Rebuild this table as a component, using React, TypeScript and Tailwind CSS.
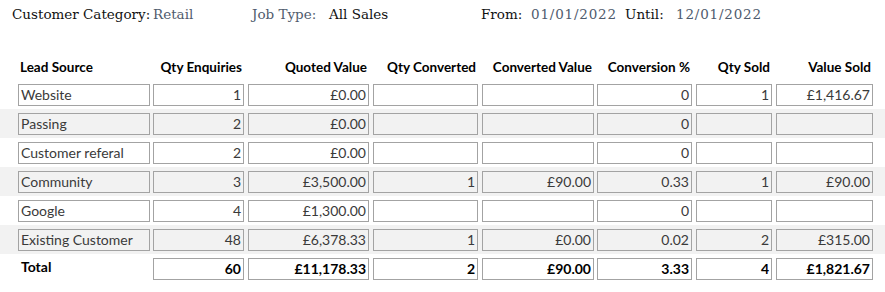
import React from 'react'

type Row = {
  source: string
  enquiries: string
  quoted: string
  converted: string
  convertedValue: string
  conversion: string
  sold: string
  valueSold: string
}

const ROWS: Row[] = [
  { source: 'Website', enquiries: '1', quoted: '£0.00', converted: '', convertedValue: '', conversion: '0', sold: '1', valueSold: '£1,416.67' },
  { source: 'Passing', enquiries: '2', quoted: '£0.00', converted: '', convertedValue: '', conversion: '0', sold: '', valueSold: '' },
  { source: 'Customer referal', enquiries: '2', quoted: '£0.00', converted: '', convertedValue: '', conversion: '0', sold: '', valueSold: '' },
  { source: 'Community', enquiries: '3', quoted: '£3,500.00', converted: '1', convertedValue: '£90.00', conversion: '0.33', sold: '1', valueSold: '£90.00' },
  { source: 'Google', enquiries: '4', quoted: '£1,300.00', converted: '', convertedValue: '', conversion: '0', sold: '', valueSold: '' },
  { source: 'Existing Customer', enquiries: '48', quoted: '£6,378.33', converted: '1', convertedValue: '£0.00', conversion: '0.02', sold: '2', valueSold: '£315.00' },
]

// box width + gap before it, matched to the report grid
const COLS = [
  'w-[132px] ml-[18px]',
  'w-[91px] ml-[3px]',
  'w-[121px] ml-[4px]',
  'w-[105px] ml-[4px]',
  'w-[112px] ml-[4px]',
  'w-[95px] ml-[3px]',
  'w-[76px] ml-[4px]',
  'w-[97px] ml-[4px]',
]

const HEADERS = [
  'Lead Source',
  'Qty Enquiries',
  'Quoted Value',
  'Qty Converted',
  'Converted Value',
  'Conversion %',
  'Qty Sold',
  'Value Sold',
]

const sans = "font-['Lato','Noto_Sans',sans-serif]"
const serif = "font-['DejaVu_Serif','Liberation_Serif',serif]"

function Box({ col, value, left, shaded, bold }: { col: number; value: string; left?: boolean; shaded?: boolean; bold?: boolean }) {
  return (
    <div
      className={`${COLS[col]} h-[22px] shrink-0 border border-[#a3a3a3] px-[2px] leading-[20px] whitespace-nowrap ${
        left ? 'text-left' : 'text-right'
      } ${shaded ? 'bg-[#f2f2f2]' : 'bg-white'} ${bold ? 'font-bold text-black' : 'text-[#3a3a3a]'}`}
    >
      {value}
    </div>
  )
}

export default function App() {
  return (
    <div className="w-[885px] h-[292px] overflow-hidden bg-white">
      <div className={`${serif} flex h-[28px] items-center whitespace-nowrap text-[13.5px]`}>
        <span className="ml-[12px] w-[141px] text-[#111]">Customer Category:</span>
        <span className="w-[99px] text-[#4f5b6d]">Retail</span>
        <span className="w-[77px] text-[#4f5b6d]">Job Type:</span>
        <span className="w-[152px] text-[#111]">All Sales</span>
        <span className="w-[50px] text-[#111]">From:</span>
        <span className="w-[94px] tracking-[0.8px] text-[#4f5b6d]">01/01/2022</span>
        <span className="w-[51px] text-[#111]">Until:</span>
        <span className="tracking-[0.8px] text-[#4f5b6d]">12/01/2022</span>
      </div>

      <div className={`${sans} text-[14px]`}>
        <div className="mt-[28px] mb-[2px] flex h-[22px] items-center text-[13.5px] font-bold text-black">
          {HEADERS.map((h, i) => (
            <div key={h} className={`${COLS[i]} shrink-0 whitespace-nowrap px-[2px] ${i === 0 ? 'text-left' : 'text-right'}`}>
              {h}
            </div>
          ))}
        </div>

        {ROWS.map((r, idx) => {
          const shaded = idx % 2 === 1
          const cells = [r.source, r.enquiries, r.quoted, r.converted, r.convertedValue, r.conversion, r.sold, r.valueSold]
          return (
            <div key={r.source} className={`flex h-[29px] pt-[4px] ${shaded ? 'bg-[#f2f2f2]' : 'bg-white'}`}>
              {cells.map((c, i) => (
                <Box key={i} col={i} value={c} left={i === 0} shaded={shaded} />
              ))}
            </div>
          )
        })}

        <div className="flex h-[29px] pt-[4px]">
          <div className={`${COLS[0]} h-[22px] shrink-0 px-[3px] font-bold leading-[18px] text-black`}>Total</div>
          {['60', '£11,178.33', '2', '£90.00', '3.33', '4', '£1,821.67'].map((v, i) => (
            <Box key={i} col={i + 1} value={v} bold />
          ))}
        </div>
      </div>
    </div>
  )
}
